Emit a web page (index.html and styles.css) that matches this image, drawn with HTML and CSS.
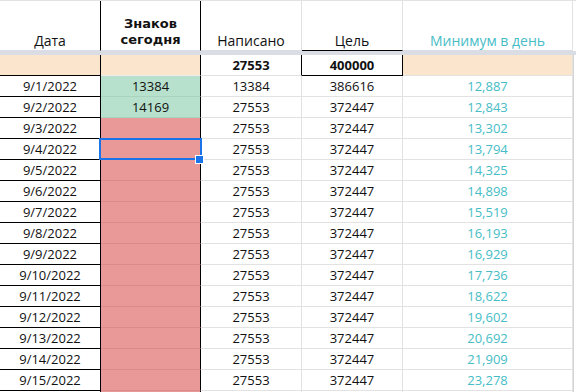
FILE: index.html
```html
<!DOCTYPE html>
<html lang="ru">
<head>
<meta charset="utf-8">
<title>Sheet</title>
<link rel="stylesheet" href="styles.css">
</head>
<body>
<div class="sheet">
  <div class="row head">
    <div class="cell ca">Дата</div>
    <div class="cell cb bold"><span class="hl">Знаков</span><span class="hl">сегодня</span></div>
    <div class="cell cc">Написано</div>
    <div class="cell cd goal-head">Цель</div>
    <div class="cell ce teal">Минимум в день</div>
    <div class="fill"></div>
  </div>
  <div class="freeze"></div>
  <div class="row sum">
    <div class="cell ca orange"></div>
    <div class="cell cb orange"></div>
    <div class="cell cc bold total">27553</div>
    <div class="cell cd bold goal">400000</div>
    <div class="cell ce orange"></div>
    <div class="fill"></div>
  </div>
  <div class="row"><div class="cell ca">9/1/2022</div><div class="cell cb green">13384</div><div class="cell cc">13384</div><div class="cell cd">386616</div><div class="cell ce teal">12,887</div><div class="fill"></div></div>
  <div class="row"><div class="cell ca">9/2/2022</div><div class="cell cb green">14169</div><div class="cell cc">27553</div><div class="cell cd">372447</div><div class="cell ce teal">12,843</div><div class="fill"></div></div>
  <div class="row"><div class="cell ca">9/3/2022</div><div class="cell cb red"></div><div class="cell cc">27553</div><div class="cell cd">372447</div><div class="cell ce teal">13,302</div><div class="fill"></div></div>
  <div class="row"><div class="cell ca">9/4/2022</div><div class="cell cb red"></div><div class="cell cc">27553</div><div class="cell cd">372447</div><div class="cell ce teal">13,794</div><div class="fill"></div></div>
  <div class="row"><div class="cell ca">9/5/2022</div><div class="cell cb red"></div><div class="cell cc">27553</div><div class="cell cd">372447</div><div class="cell ce teal">14,325</div><div class="fill"></div></div>
  <div class="row"><div class="cell ca">9/6/2022</div><div class="cell cb red"></div><div class="cell cc">27553</div><div class="cell cd">372447</div><div class="cell ce teal">14,898</div><div class="fill"></div></div>
  <div class="row"><div class="cell ca">9/7/2022</div><div class="cell cb red"></div><div class="cell cc">27553</div><div class="cell cd">372447</div><div class="cell ce teal">15,519</div><div class="fill"></div></div>
  <div class="row"><div class="cell ca">9/8/2022</div><div class="cell cb red"></div><div class="cell cc">27553</div><div class="cell cd">372447</div><div class="cell ce teal">16,193</div><div class="fill"></div></div>
  <div class="row"><div class="cell ca">9/9/2022</div><div class="cell cb red"></div><div class="cell cc">27553</div><div class="cell cd">372447</div><div class="cell ce teal">16,929</div><div class="fill"></div></div>
  <div class="row"><div class="cell ca">9/10/2022</div><div class="cell cb red"></div><div class="cell cc">27553</div><div class="cell cd">372447</div><div class="cell ce teal">17,736</div><div class="fill"></div></div>
  <div class="row"><div class="cell ca">9/11/2022</div><div class="cell cb red"></div><div class="cell cc">27553</div><div class="cell cd">372447</div><div class="cell ce teal">18,622</div><div class="fill"></div></div>
  <div class="row"><div class="cell ca">9/12/2022</div><div class="cell cb red"></div><div class="cell cc">27553</div><div class="cell cd">372447</div><div class="cell ce teal">19,602</div><div class="fill"></div></div>
  <div class="row"><div class="cell ca">9/13/2022</div><div class="cell cb red"></div><div class="cell cc">27553</div><div class="cell cd">372447</div><div class="cell ce teal">20,692</div><div class="fill"></div></div>
  <div class="row"><div class="cell ca">9/14/2022</div><div class="cell cb red"></div><div class="cell cc">27553</div><div class="cell cd">372447</div><div class="cell ce teal">21,909</div><div class="fill"></div></div>
  <div class="row"><div class="cell ca">9/15/2022</div><div class="cell cb red"></div><div class="cell cc">27553</div><div class="cell cd">372447</div><div class="cell ce teal">23,278</div><div class="fill"></div></div>
  <div class="row"><div class="cell ca"></div><div class="cell cb red"></div><div class="cell cc"></div><div class="cell cd"></div><div class="cell ce teal"></div><div class="fill"></div></div>
  <div class="selection"></div>
  <div class="handle"></div>
</div>
</body>
</html>
```
FILE: styles.css
```css
html, body {
  margin: 0;
  padding: 0;
  background: #ffffff;
  overflow: hidden;
}

.sheet {
  position: relative;
  width: 576px;
  height: 392px;
  overflow: hidden;
  border-top: 1px solid #e2e2e2;
  font-family: "Open Sans", "DejaVu Sans", sans-serif;
  font-size: 13px;
  color: #111111;
}

.row {
  display: grid;
  grid-template-columns: 101px 100px 101px 101px 170px 3px;
  height: 21px;
}

.cell {
  box-sizing: border-box;
  border-right: 1px solid #e2e2e2;
  border-bottom: 1px solid #e2e2e2;
  display: flex;
  align-items: center;
  justify-content: center;
  white-space: nowrap;
  line-height: 16px;
}

.cell.ca {
  border-right-color: #000000;
  border-bottom-color: #000000;
}

.cell.cb {
  border-right-color: #000000;
}

.row.head {
  height: 50px;
}

.row.head .cell {
  align-items: flex-end;
  text-align: center;
  font-size: 14px;
  padding-bottom: 1px;
  border-bottom-color: #dadde3;
}

.row.head .cell.cb {
  flex-direction: column;
  align-items: center;
  justify-content: flex-end;
  font-family: "DejaVu Sans", "Open Sans", sans-serif;
  font-size: 13px;
  padding-bottom: 2px;
}

.hl {
  display: block;
  height: 16px;
  line-height: 16px;
}

.row.head .cell.ca {
  border-bottom-color: #dadde3;
}

.row.head .cell.goal-head {
  border-bottom-color: #000000;
}

.freeze {
  height: 4px;
  background: #dadde3;
}

.fill {
  background: #ffffff;
  border-left: 1px solid #d5d5d5;
}

.row.head .fill {
  border-left: none;
}

.bold {
  font-weight: 700;
}

.teal {
  color: #46bdc6;
}

.orange {
  background: #fce5cd;
}

.row.sum .cell.cc {
  border-right-color: #000000;
}

.row.sum .cell.goal {
  border-right-color: #000000;
  border-bottom-color: #000000;
}

.row.sum .cell.cb {
  border-bottom-color: #ececec;
}

.green {
  background: #b7e1cd;
  border-bottom-color: #a9d3bf !important;
}

.red {
  background: #ea9999;
  border-bottom-color: #d98a8a !important;
}

.selection {
  position: absolute;
  left: 99px;
  top: 137px;
  width: 103px;
  height: 22px;
  box-sizing: border-box;
  border: 2px solid #1a73e8;
}

.handle {
  position: absolute;
  left: 195px;
  top: 154px;
  width: 7px;
  height: 7px;
  background: #1a73e8;
  border: 1px solid #ffffff;
}
```
